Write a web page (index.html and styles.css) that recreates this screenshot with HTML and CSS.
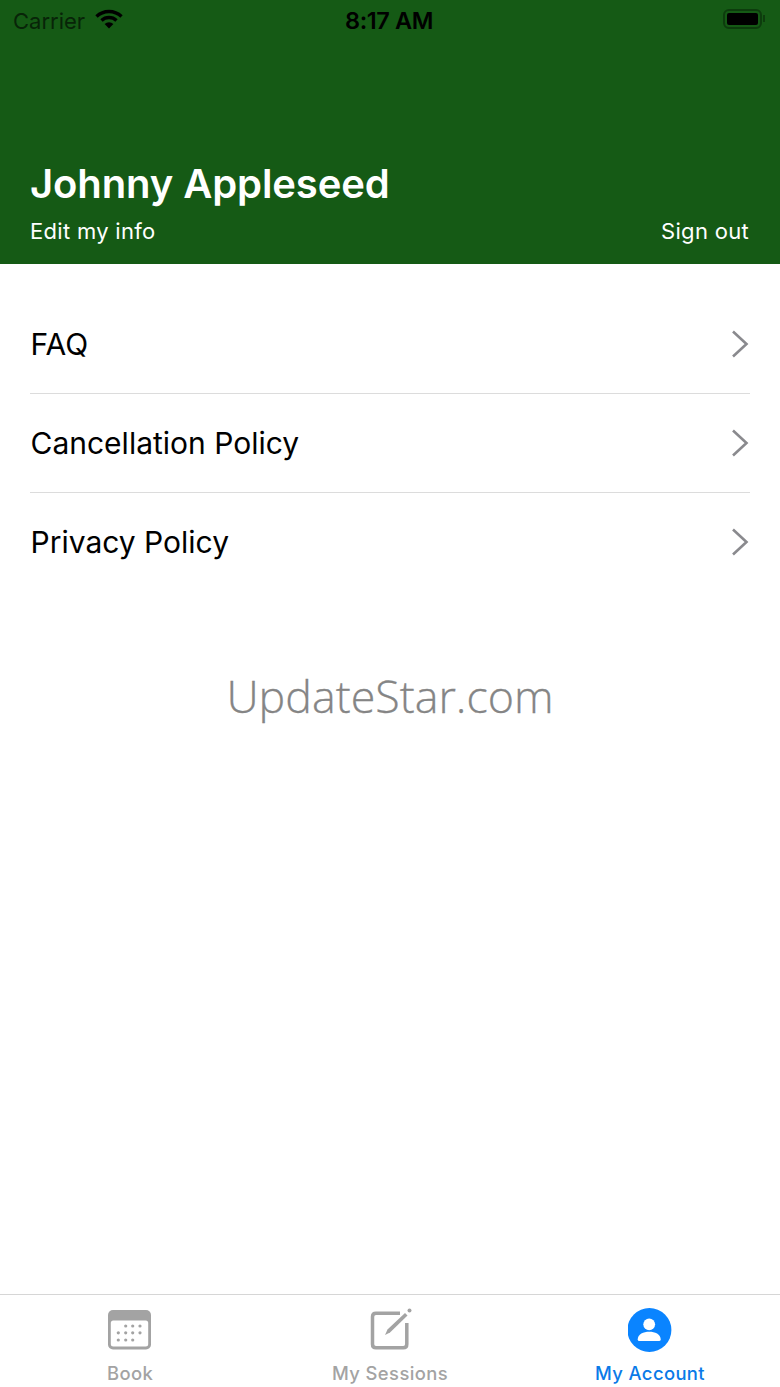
FILE: index.html
```html
<!DOCTYPE html>
<html lang="en">
<head>
    <meta charset="UTF-8">
    <meta name="viewport" content="width=device-width, initial-scale=1.0">
    <title>My Account</title>
    <link rel="stylesheet" href="styles.css">
</head>
<body>
    <div class="app">
        <header class="header">
            <div class="status-bar">
                <div class="status-left">
                    <span class="carrier">Carrier</span>
                    <svg class="wifi" width="28" height="20" viewBox="0 0 28 20">
                        <path d="M1.5 7.5 A18 18 0 0 1 26.5 7.5" fill="none" stroke="#000" stroke-width="3.4"/>
                        <path d="M6.5 11.5 A11 11 0 0 1 21.5 11.5" fill="none" stroke="#000" stroke-width="3.4"/>
                        <path d="M14 19.5 L9.6 15 A6.5 6.5 0 0 1 18.4 15 Z" fill="#000"/>
                    </svg>
                </div>
                <span class="clock">8:17 AM</span>
                <div class="battery">
                    <div class="battery-body"><div class="battery-fill"></div></div>
                    <div class="battery-cap"></div>
                </div>
            </div>
            <h1 class="user-name">Johnny Appleseed</h1>
            <div class="header-links">
                <span>Edit my info</span>
                <span>Sign out</span>
            </div>
        </header>

        <main class="content">
            <ul class="menu">
                <li class="menu-item">
                    <span>FAQ</span>
                    <svg class="chevron" width="18" height="28" viewBox="0 0 18 28"><path d="M2 1.5 L15.5 14 L2 26.5" fill="none" stroke="#8a8a8e" stroke-width="2.6"/></svg>
                </li>
                <li class="menu-item">
                    <span>Cancellation Policy</span>
                    <svg class="chevron" width="18" height="28" viewBox="0 0 18 28"><path d="M2 1.5 L15.5 14 L2 26.5" fill="none" stroke="#8a8a8e" stroke-width="2.6"/></svg>
                </li>
                <li class="menu-item">
                    <span>Privacy Policy</span>
                    <svg class="chevron" width="18" height="28" viewBox="0 0 18 28"><path d="M2 1.5 L15.5 14 L2 26.5" fill="none" stroke="#8a8a8e" stroke-width="2.6"/></svg>
                </li>
            </ul>
            <div class="watermark">UpdateStar.com</div>
        </main>

        <nav class="tabbar">
            <div class="tab">
                <svg class="tab-icon" width="44" height="44" viewBox="0 0 44 44">
                    <rect x="0" y="2" width="43" height="39.5" rx="5" fill="#a3a3a3"/>
                    <rect x="2.8" y="12.5" width="37.4" height="26" rx="2.5" fill="#fff"/>
                    <g fill="#a3a3a3">
                        <circle cx="17.7" cy="18" r="1.6"/><circle cx="24.7" cy="18" r="1.6"/><circle cx="32" cy="18" r="1.6"/>
                        <circle cx="10.3" cy="24.8" r="1.6"/><circle cx="17.7" cy="24.8" r="1.6"/><circle cx="24.7" cy="24.8" r="1.6"/><circle cx="32" cy="24.8" r="1.6"/>
                        <circle cx="10.3" cy="32" r="1.6"/><circle cx="17.7" cy="32" r="1.6"/><circle cx="24.7" cy="32" r="1.6"/>
                    </g>
                </svg>
                <span>Book</span>
            </div>
            <div class="tab">
                <svg class="tab-icon" width="44" height="44" viewBox="0 0 44 44">
                    <path d="M32 5.2 H8 Q4.5 5.2 4.5 8.7 V36.3 Q4.5 39.8 8 39.8 H35.3 Q38.8 39.8 38.8 36.3 V15" fill="none" stroke="#a3a3a3" stroke-width="3.5"/>
                    <path d="M17 27 L19.5 21.5 L37 5 L39.5 7.5 L22 24.5 Z" fill="#a3a3a3"/>
                    <circle cx="41.5" cy="2.5" r="2" fill="#a3a3a3"/>
                </svg>
                <span>My Sessions</span>
            </div>
            <div class="tab tab-active">
                <svg class="tab-icon" width="44" height="44" viewBox="0 0 44 44">
                    <circle cx="21.4" cy="22" r="22" fill="#0a84ff"/>
                    <circle cx="21.2" cy="16.3" r="5.9" fill="#fff"/>
                    <path d="M9.7 31.5 C9.7 26 15.5 23.7 21.2 23.7 C27 23.7 32.7 26 32.7 31.5 Q32.7 33 31 33 H11.4 Q9.7 33 9.7 31.5 Z" fill="#fff"/>
                </svg>
                <span>My Account</span>
            </div>
        </nav>
    </div>
</body>
</html>
```

FILE: styles.css
```css
html, body {
    margin: 0;
    padding: 0;
    background-color: #fff;
}
body {
    font-family: Inter, "Liberation Sans", Arial, sans-serif;
}
.app {
    width: 780px;
    height: 1387px;
    display: flex;
    flex-direction: column;
    overflow: hidden;
}

/* header */
.header {
    height: 264px;
    box-sizing: border-box;
    background-color: #155a15;
    color: #fff;
    padding: 0 31px 0 30px;
    display: flex;
    flex-direction: column;
}
.status-bar {
    height: 41px;
    margin: 0 -16px 0 -17px;
    display: grid;
    grid-template-columns: 1fr auto 1fr;
    align-items: center;
    color: #000;
}
.status-left {
    display: flex;
    align-items: center;
    gap: 10px;
}
.carrier {
    font-size: 22px;
    color: #082408;
}
.wifi {
    margin-top: -4px;
}
.clock {
    font-size: 23.5px;
    font-weight: 600;
    letter-spacing: -0.4px;
}
.battery {
    justify-self: end;
    display: flex;
    align-items: center;
    gap: 1px;
    margin-top: -4px;
}
.battery-body {
    width: 39px;
    height: 20px;
    box-sizing: border-box;
    border: 2px solid #0d3c0d;
    border-radius: 6px;
    padding: 2px;
}
.battery-fill {
    height: 100%;
    background-color: #000;
    border-radius: 2px;
}
.battery-cap {
    width: 2px;
    height: 7px;
    background-color: #0d3c0d;
}
.user-name {
    margin: 119px 0 0;
    font-size: 40px;
    line-height: 48px;
    font-weight: 600;
    letter-spacing: -0.1px;
}
.header-links {
    margin-top: 9px;
    display: flex;
    justify-content: space-between;
    font-size: 22px;
    line-height: 28px;
    letter-spacing: 0.3px;
}

/* menu */
.content {
    flex: 1;
}
.menu {
    list-style: none;
    margin: 31px 0 0;
    padding: 0 30px;
}
.menu-item {
    height: 98px;
    padding: 0 1px 0 0.5px;
    display: flex;
    justify-content: space-between;
    align-items: center;
    font-size: 30px;
    color: #000;
    border-bottom: 1px solid #dcdcdc;
}
.menu-item:last-child {
    border-bottom: none;
}
.watermark {
    margin-top: 75px;
    text-align: center;
    font-family: "Open Sans", sans-serif;
    font-size: 44.8px;
    line-height: 60px;
    font-weight: 300;
    color: #858585;
    -webkit-text-stroke: 0.3px #858585;
}

/* tab bar */
.tabbar {
    height: 92px;
    border-top: 1px solid #d6d6d6;
    display: grid;
    grid-template-columns: repeat(3, 1fr);
}
.tab {
    display: flex;
    flex-direction: column;
    align-items: center;
    padding-top: 13px;
    font-size: 18.4px;
    font-weight: 500;
    letter-spacing: 0.4px;
    color: #a3a3a3;
}
.tab-active {
    color: #0a7ae8;
}
.tab-icon {
    margin-bottom: 10px;
}
```
